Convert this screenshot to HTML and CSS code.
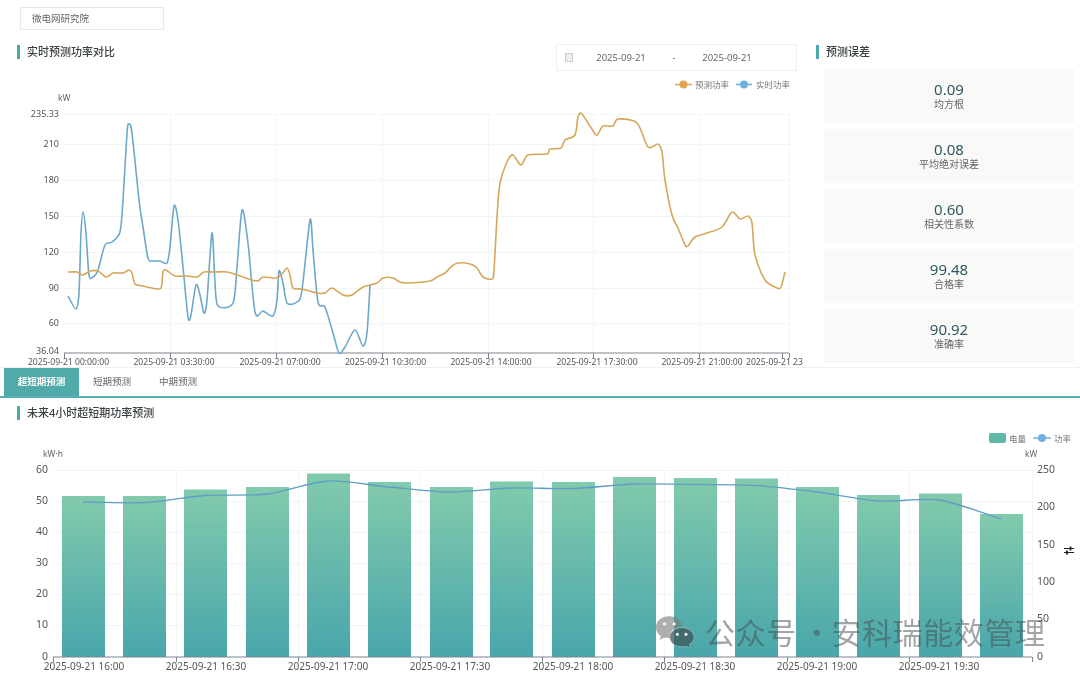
FILE: index.html
```html
<!DOCTYPE html>
<html lang="zh">
<head>
<meta charset="utf-8">
<title>微电网研究院</title>
<link rel="stylesheet" href="styles.css">
</head>
<body>
<div class="page">
  <section class="top">
    <div class="left">
      <div class="select">微电网研究院</div>
      <div class="head-row">
        <h2 class="title">实时预测功率对比</h2>
        <div class="picker">
          <span class="check"></span>
          <span class="date">2025-09-21</span>
          <span class="dash">-</span>
          <span class="date">2025-09-21</span>
        </div>
      </div>
      <svg class="chart chart-top" viewBox="0 75 815 293" width="815" height="293">
        <g class="grid">
          <path d="M64 114.500H789M64 144.500H789M64 180.500H789M64 216.500H789M64 252.500H789M64 288.500H789M64 323.500H789"/>
          <path d="M170.500 114V352M276.500 114V352M382.500 114V352M488.500 114V352M593.500 114V352M699.500 114V352M789.500 114V352"/>
        </g>
        <path class="axis" d="M64 353H789M64.500 353V358M170.500 353V358M276.500 353V358M382.500 353V358M488.500 353V358M593.500 353V358M699.500 353V358M782.500 353V358M789.500 353V358"/>
        <path id="real" class="line real"/>
        <path id="pred" class="line pred"/>
        <g class="ylab">
          <text x="59" y="117">235.33</text><text x="59" y="147">210</text><text x="59" y="183">180</text><text x="59" y="219">150</text><text x="59" y="255">120</text><text x="59" y="291">90</text><text x="59" y="326">60</text><text x="59" y="354">36.04</text>
        </g>
        <text class="unit" x="58" y="101">kW</text>
        <g class="xlab">
          <text x="68.500" y="365">2025-09-21 00:00:00</text><text x="174" y="365">2025-09-21 03:30:00</text><text x="280" y="365">2025-09-21 07:00:00</text><text x="385.500" y="365">2025-09-21 10:30:00</text><text x="491" y="365">2025-09-21 14:00:00</text><text x="597" y="365">2025-09-21 17:30:00</text><text x="702" y="365">2025-09-21 21:00:00</text>
          <text class="xlast" x="746" y="365">2025-09-21 23</text>
        </g>
        <g class="legend">
          <path class="lg-pred" d="M675 84.500H692"/><circle class="dot-pred" cx="683.500" cy="84.500" r="4"/><text x="695" y="87.500">预测功率</text>
          <path class="lg-real" d="M736 84.500H752"/><circle class="dot-real" cx="744" cy="84.500" r="4"/><text x="756" y="87.500">实时功率</text>
        </g>
      </svg>
    </div>
    <aside class="right">
      <h2 class="title">预测误差</h2>
      <div class="cards">
        <div class="card"><b>0.09</b><span>均方根</span></div>
        <div class="card"><b>0.08</b><span>平均绝对误差</span></div>
        <div class="card"><b>0.60</b><span>相关性系数</span></div>
        <div class="card"><b>99.48</b><span>合格率</span></div>
        <div class="card"><b>90.92</b><span>准确率</span></div>
      </div>
    </aside>
  </section>

  <nav class="tabs">
    <a class="tab active">超短期预测</a>
    <a class="tab">短期预测</a>
    <a class="tab">中期预测</a>
  </nav>

  <section class="bottom">
    <h2 class="title">未来4小时超短期功率预测</h2>
    <svg class="chart chart-bottom" viewBox="0 425 1080 249" width="1080" height="249">
      <defs>
        <linearGradient id="barfill" x1="0" y1="0" x2="0" y2="1">
          <stop offset="0" stop-color="#82caac"/><stop offset="1" stop-color="#49a6ab"/>
        </linearGradient>
      </defs>
      <g class="grid">
        <path d="M53 470.500H1032M53 501.500H1032M53 532.500H1032M53 563.500H1032M53 594.500H1032M53 625.500H1032"/>
        <path d="M176.500 470V657M298.500 470V657M420.500 470V657M542.500 470V657M664.500 470V657M787.500 470V657M909.500 470V657M1032.500 470V657"/>
      </g>
      <g class="bars">
        <rect x="62" y="496" width="43" height="161"/><rect x="123" y="496" width="43" height="161"/><rect x="184" y="489.500" width="43" height="167.500"/><rect x="246" y="487" width="43" height="170"/><rect x="307" y="473.500" width="43" height="183.500"/><rect x="368" y="482" width="43" height="175"/><rect x="430" y="487" width="43" height="170"/><rect x="490" y="481.500" width="43" height="175.500"/><rect x="552" y="482" width="43" height="175"/><rect x="613" y="477" width="43" height="180"/><rect x="674" y="478" width="43" height="179"/><rect x="735" y="478.500" width="43" height="178.500"/><rect x="796" y="487" width="43" height="170"/><rect x="857" y="495" width="43" height="162"/><rect x="919" y="493.500" width="43" height="163.500"/><rect x="980" y="514" width="43" height="143"/>
      </g>
      <path id="power" class="line power"/>
      <path class="axis" d="M53 657H1032M53.500 657V662M176.500 657V662M298.500 657V662M420.500 657V662M542.500 657V662M664.500 657V662M787.500 657V662M909.500 657V662M1032.500 657V662"/>
      <g class="ylab big">
        <text x="48" y="473">60</text><text x="48" y="504">50</text><text x="48" y="535">40</text><text x="48" y="566">30</text><text x="48" y="597">20</text><text x="48" y="628">10</text><text x="48" y="660">0</text>
      </g>
      <g class="rlab big">
        <text x="1037" y="473">250</text><text x="1037" y="510">200</text><text x="1037" y="547.500">150</text><text x="1037" y="585">100</text><text x="1037" y="622">50</text><text x="1037" y="660">0</text>
      </g>
      <text class="unit" x="43" y="457">kW·h</text>
      <text class="unit" x="1025" y="457">kW</text>
      <g class="xlab big">
        <text x="84" y="670">2025-09-21 16:00</text><text x="206" y="670">2025-09-21 16:30</text><text x="328" y="670">2025-09-21 17:00</text><text x="450" y="670">2025-09-21 17:30</text><text x="573" y="670">2025-09-21 18:00</text><text x="695" y="670">2025-09-21 18:30</text><text x="817" y="670">2025-09-21 19:00</text><text x="939" y="670">2025-09-21 19:30</text>
      </g>
      <g class="legend">
        <rect class="lg-bar" x="989" y="433" width="17" height="10" rx="2"/><text x="1009" y="441.500">电量</text>
        <path class="lg-real" d="M1033 438H1051"/><circle class="dot-real" cx="1042" cy="438" r="4"/><text x="1054" y="441.500">功率</text>
      </g>
      <g class="sliders">
        <path d="M1064 548.500H1074M1064 552.500H1074"/>
        <path class="knob" d="M1070.500 546.500V550.500M1067 550.500V554.500"/>
      </g>
    </svg>
  </section>

  <div class="watermark">
    <svg class="wechat" viewBox="0 0 42 34" width="40" height="33">
      <path class="bub-a" d="M15 1C7 1 1 6 1 12.500C1 16.500 3 19.500 6 21.500L5 26L10 23.200C12 23.800 14 24 16 23.900C15 17 21 11.500 29 11.800C27.500 5.500 22 1 15 1Z"/>
      <path class="bub-b" d="M28 13C21 13 15.500 17.500 15.500 23C15.500 28.500 21 33 28 33C29.500 33 31 32.700 32.500 32.300L37 34.500L36 30.500C39 28.500 41 26 41 23C41 17.500 35 13 28 13Z"/>
      <circle class="eye" cx="10" cy="9" r="1.800"/><circle class="eye" cx="20" cy="9" r="1.800"/><circle class="eye" cx="23.500" cy="20" r="1.600"/><circle class="eye" cx="32.500" cy="20" r="1.600"/>
    </svg>
    <span class="wm-text">公众号<span class="wm-dot">·</span>安科瑞能效管理</span>
  </div>
</div>
<script src="app.js"></script>
</body>
</html>
```
FILE: styles.css
```css
* { box-sizing: border-box; }
html, body { margin: 0; padding: 0; background: #fff; }
body {
  width: 1080px;
  height: 674px;
  overflow: hidden;
  font-family: "Noto Sans", "Noto Sans CJK SC", sans-serif;
  color: #3c4448;
}
.page { position: relative; width: 1080px; height: 674px; filter: blur(.35px); }

.top { display: flex; height: 368px; border-bottom: 1px solid #f0f0f0; }
.left { width: 815px; flex: none; }
.right { flex: 1; padding-top: 45px; padding-left: 1px; }

.select {
  width: 144px; height: 23px;
  margin: 7px 0 0 20px;
  padding-left: 11px;
  border: 1px solid #e6e8e8;
  font-size: 9.500px; line-height: 21px; color: #666;
}
.head-row { display: flex; justify-content: space-between; align-items: flex-start; height: 45px; padding: 14px 18px 0 17px; }

.title {
  margin: 0;
  height: 14px;
  padding-left: 7px;
  border-left: 3px solid #47aaae;
  font-size: 11px; line-height: 14px; font-weight: 500; color: #3a3f42;
}
.head-row .title { margin-top: 1px; }

.picker {
  width: 241px; height: 27px;
  display: flex; align-items: center;
  padding-left: 8px;
  border: 1px solid #eef0f0;
  font-size: 9.500px; color: #666;
}
.check { width: 8px; height: 9px; border: 1px solid #c9cccc; background: #eeeeee; margin-right: 23px; }
.date { width: 50px; text-align: center; white-space: nowrap; }
.dash { width: 56px; text-align: center; }

.chart { display: block; }
.grid path { stroke: #f3f4f4; stroke-width: 1; fill: none; }
.axis { stroke: #7d8590; stroke-width: 1; fill: none; }
.line { fill: none; stroke-linejoin: round; }
.real { stroke: #6ba8cb; stroke-width: 1.600; }
.pred { stroke: #d6a75a; stroke-width: 1.600; }
.power { stroke: #5f9ec4; stroke-width: 1.300; }

svg text { font-family: "Noto Sans", "Noto Sans CJK SC", sans-serif; }
.ylab text { font-size: 9px; fill: #555; text-anchor: end; }
.ylab.big text, .rlab.big text { font-size: 10.500px; }
.rlab text { fill: #555; }
.xlab text { font-size: 8.600px; fill: #555; text-anchor: middle; }
.xlab.big text { font-size: 10px; }
.xlab .xlast { text-anchor: start; }
.unit { font-size: 8.500px; fill: #666; }
.legend text { font-size: 8.500px; fill: #777; }
.lg-pred { stroke: #dfa650; stroke-width: 1.500; }
.lg-real { stroke: #6fb0e0; stroke-width: 1.500; }
.dot-pred { fill: #dfa650; }
.dot-real { fill: #6fb0e0; }
.lg-bar { fill: #5fb7aa; }
.bars rect { fill: url(#barfill); }
.sliders path { stroke: #222; stroke-width: 1; fill: none; }
.sliders .knob { stroke-width: 1.800; }

.cards { display: flex; flex-direction: column; gap: 6px; margin: 10px 6px 0 8px; }
.card {
  height: 54px;
  padding-bottom: 2px;
  display: flex; flex-direction: column; align-items: center; justify-content: center;
  background: #f9f9f8;
}
.card b { font-weight: 400; font-size: 15px; line-height: 16px; color: #2e5a5f; }
.card span { font-size: 10px; line-height: 12px; margin-top: 1px; color: #666; }

.tabs { display: flex; height: 30px; padding-left: 4px; border-bottom: 2px solid #55b0ae; }
.tab { height: 28px; font-size: 9.500px; line-height: 28px; color: #666; padding: 0 14px; }
.tab.active { width: 75px; padding: 0; text-align: center; color: #fff; font-weight: 700; background: #4faaa9; }

.bottom { padding-top: 8px; }
.bottom .title { margin-left: 17px; }
.chart-bottom { margin-top: 5px; }

.watermark {
  position: absolute; left: 655px; top: 611px;
  display: flex; align-items: center; gap: 10px;
}
.wechat { flex: none; }
.bub-a { fill: rgba(120,120,120,.6); }
.bub-b { fill: rgba(60,85,90,.75); stroke: #fff; stroke-opacity: .5; stroke-width: .6; }
.eye { fill: #f2f2f2; }
.wm-text { font-size: 30px; line-height: 40px; letter-spacing: .6px; white-space: nowrap; color: rgba(70,75,78,.5); font-family: "Noto Sans CJK SC", sans-serif; }
.wm-dot { margin: 0 -1px 0 5px; }
```
FILE: app.js
```js
// Draws the chart lines from their sampled series as smooth curves.
function smooth(pts) {
  var d = 'M' + pts[0][0] + ' ' + pts[0][1];
  for (var i = 0; i < pts.length - 1; i++) {
    var p0 = pts[i - 1] || pts[i], p1 = pts[i], p2 = pts[i + 1], p3 = pts[i + 2] || p2;
    var k = 0.14;
    d += 'C' + (p1[0] + (p2[0] - p0[0]) * k).toFixed(1) + ' ' + (p1[1] + (p2[1] - p0[1]) * k).toFixed(1) + ' ' +
      (p2[0] - (p3[0] - p1[0]) * k).toFixed(1) + ' ' + (p2[1] - (p3[1] - p1[1]) * k).toFixed(1) + ' ' + p2[0] + ' ' + p2[1];
  }
  return d;
}
var pred = [[68,272],[77,272],[83,275],[90,271],[98,271],[106,277],[113,273],[123,273],[129,270],[132,273],[135,284],[143,286],[152,288],[161,288],[163,272],[166,270],[175,276],[187,276],[197,277],[204,272],[213,272],[227,272],[240,276],[257,281],[263,277],[276,278],[282,274],[287,268],[290,275],[293,288],[302,289],[317,293],[325,293],[332,288],[343,295],[352,295],[363,287],[377,283],[383,278],[393,278],[400,282],[407,283],[430,281],[437,277],[445,273],[452,266],[458,263],[470,264],[477,268],[483,277],[492,279],[494,270],[497,217],[500,183],[508,160],[513,155],[521,165],[528,155],[547,154],[550,149],[561,148],[565,140],[575,135],[578,117],[582,114],[595,134],[598,134],[603,126],[613,126],[618,119],[637,123],[648,147],[658,144],[662,152],[665,180],[672,215],[678,228],[685,245],[688,246],[695,237],[707,233],[722,227],[732,212],[740,219],[748,216],[752,223],[755,255],[765,280],[777,288],[781,287],[785,272]];
var real = [[68,296],[76,309],[79,293],[81,233],[83,212],[86,233],[89,275],[93,277],[98,270],[105,245],[112,242],[120,232],[123,200],[127,133],[129,124],[132,133],[139,200],[143,227],[148,258],[153,261],[160,261],[167,263],[170,247],[174,206],[178,220],[183,267],[188,317],[191,315],[196,285],[200,295],[204,313],[207,300],[212,233],[215,283],[218,306],[233,303],[237,267],[242,210],[248,243],[255,312],[263,311],[273,316],[277,300],[279,271],[283,283],[287,303],[297,302],[302,290],[310,220],[313,250],[318,302],[325,307],[333,333],[339,353],[345,347],[355,330],[363,346],[367,333],[370,285]];
var power = [[83,502],[144.5,502.5],[206,495.5],[267,494],[328,481],[389,487],[450,492],[511,488],[573,488.5],[634,484],[695,484.5],[756,485.5],[817,492],[878,501],[939,500],[1001,519]];
document.getElementById('pred').setAttribute('d', smooth(pred));
document.getElementById('real').setAttribute('d', smooth(real));
document.getElementById('power').setAttribute('d', smooth(power));
```
